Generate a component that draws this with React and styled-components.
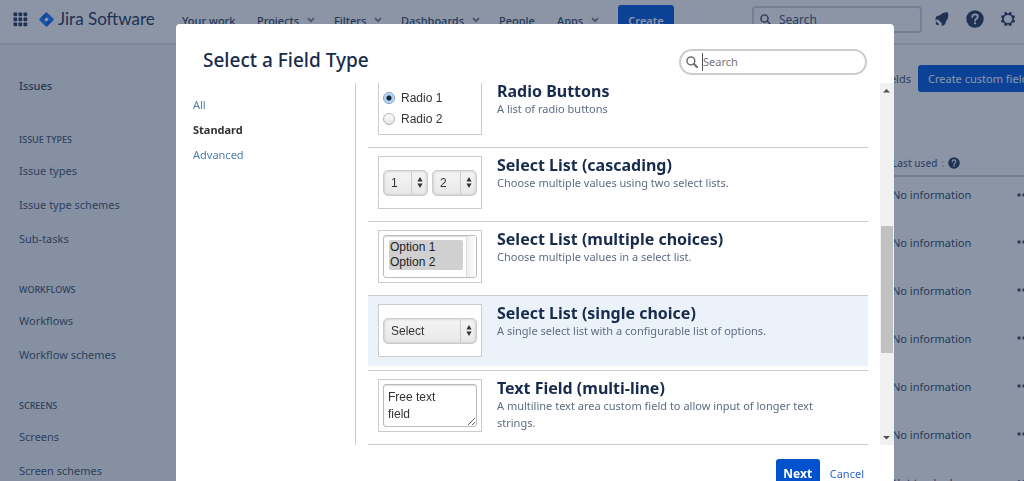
import React from "react";
import styled, { createGlobalStyle, css } from "styled-components";

const ui = '"Noto Sans", "Open Sans", sans-serif';
const arial = '"Liberation Sans", Arial, sans-serif';

const GlobalStyle = createGlobalStyle`
  *, *::before, *::after { box-sizing: border-box; }
  html, body { margin: 0; height: 100%; overflow: hidden; }
  body { font-family: ${ui}; font-size: 11px; color: #172b4d; background: #fff; }
  button, input, select, textarea { font-family: inherit; font-size: inherit; margin: 0; }
  a { text-decoration: none; color: inherit; }
  h1, h2, h3, p, ul { margin: 0; padding: 0; list-style: none; }
`;

const Page = styled.div`
  display: flex;
  flex-direction: column;
  height: 100vh;
  overflow: hidden;
`;

/* ---------- top bar ---------- */
const TopBar = styled.header`
  display: flex;
  align-items: center;
  flex: none;
  height: 45px;
  padding: 0 8px 5px 13px;
  border-bottom: 2px solid #e3e5ea;
`;
const IconButton = styled.button`
  display: flex;
  padding: 0;
  border: 0;
  background: none;
  color: #344563;
`;
const Brand = styled.a`
  display: flex;
  align-items: center;
  gap: 4px;
  width: 143px;
  margin-left: 11px;
  font-family: Lato, sans-serif;
  font-size: 17px;
  line-height: 20px;
  white-space: nowrap;
  color: #344563;
`;
const Nav = styled.nav`
  display: flex;
  flex: none;
`;
const NavItem = styled.a`
  display: flex;
  align-items: center;
  gap: 8px;
  width: ${(p) => p.$width}px;
  padding-top: 2px;
  font-weight: 500;
  white-space: nowrap;
  color: #42526e;
`;
const CreateButton = styled.button`
  width: 56px;
  height: 28px;
  padding: 2px 0 0;
  border: 0;
  border-radius: 3px;
  background: #0f62e0;
  color: #fff;
  font-weight: 600;
`;
const TopSearch = styled.label`
  display: flex;
  align-items: center;
  gap: 8px;
  width: 170px;
  height: 27px;
  margin-left: auto;
  padding: 0 6px;
  border: 2px solid #d3d6dd;
  border-radius: 4px;
  color: #42526e;
  input {
    min-width: 0;
    flex: 1;
    padding: 0;
    border: 0;
    outline: 0;
    background: none;
    font-size: 12px;
  }
  input::placeholder { color: #505f79; opacity: 1; }
`;
const TopIcons = styled.div`
  display: flex;
  align-items: center;
  gap: 16px;
  margin-left: 12px;
`;

/* ---------- page body ---------- */
const Body = styled.div`
  display: flex;
  flex: 1;
  min-height: 0;
`;
const Sidebar = styled.aside`
  flex: none;
  width: 240px;
  padding: 31px 19px 0;
  background: #f4f5f7;
  color: #505f79;
  overflow: hidden;
`;
const SidebarTitle = styled.h2`
  height: 50px;
  font-size: 11px;
  line-height: 20px;
  font-weight: 500;
  color: #42526e;
`;
const SidebarGroup = styled.section`
  margin-bottom: 20px;
`;
const SidebarHeading = styled.h3`
  font-size: 9px;
  line-height: 28px;
  font-weight: 500;
  text-transform: uppercase;
`;
const SidebarLink = styled.a`
  display: block;
  line-height: 34px;
  white-space: nowrap;
`;
const Main = styled.main`
  flex: 1;
  min-width: 0;
  padding-top: 20px;
  overflow: hidden;
`;
const Actions = styled.div`
  display: flex;
  justify-content: flex-end;
  align-items: center;
  gap: 7px;
  margin-right: -16px;
  white-space: nowrap;
`;
const TextAction = styled.a`
  color: #505f79;
`;
const PrimaryAction = styled.button`
  width: 122px;
  height: 27px;
  padding: 0 10px;
  border: 0;
  border-radius: 3px;
  background: #0f62e0;
  color: #fff;
  text-align: left;
`;
const FieldTable = styled.table`
  width: 100%;
  margin-top: 58px;
  table-layout: fixed;
  border-collapse: collapse;
  white-space: nowrap;
  th {
    height: 26px;
    padding: 0;
    border-bottom: 2px solid #d3d6dd;
    font-size: 10px;
    font-weight: 500;
    text-align: left;
    color: #5e6c84;
  }
  td {
    height: 48px;
    padding: 0 0 12px;
    color: #42526e;
  }
`;
const UsedColumn = styled.col`
  width: 124px;
`;
const MenuColumn = styled.col`
  width: 8px;
`;
const HeaderLabel = styled.span`
  display: flex;
  align-items: center;
  gap: 4px;
`;
const Separator = styled.span`
  color: #a5adba;
`;

/* ---------- dialog ---------- */
const Blanket = styled.div`
  position: fixed;
  inset: 0;
  padding: 24px 130px 0 176px;
  background: rgba(9, 30, 66, 0.47);
  overflow: hidden;
`;
const Dialog = styled.div`
  display: flex;
  flex-direction: column;
  min-height: 100vh;
  background: #fff;
  border-radius: 4px;
`;
const DialogHeader = styled.div`
  display: flex;
  align-items: center;
  justify-content: space-between;
  height: 59px;
  padding: 12px 27px 0;
`;
const DialogTitle = styled.h1`
  font-size: 19px;
  line-height: 24px;
  font-weight: 500;
  color: #172b4d;
`;
const DialogSearch = styled.label`
  display: flex;
  align-items: center;
  gap: 4px;
  width: 188px;
  height: 26px;
  margin-top: 4px;
  padding: 0 5px;
  border: 2px solid #ccc;
  border-radius: 13px;
  color: #707070;
  input {
    min-width: 0;
    flex: 1;
    height: 18px;
    padding: 0;
    border: 0;
    border-left: 1px solid #555;
    outline: 0;
    background: none;
    font-size: 11px;
  }
  input::placeholder { color: #757575; opacity: 1; }
`;
const DialogBody = styled.div`
  display: flex;
  height: 362px;
`;
const Categories = styled.nav`
  flex: none;
  width: 180px;
  padding: 9px 17px;
  border-right: 1px solid #ccc;
`;
const Category = styled.a`
  display: block;
  line-height: 25px;
  color: ${(p) => (p.$active ? "#333" : "#4c7dab")};
  font-weight: ${(p) => (p.$active ? 700 : 400)};
`;
const TypeList = styled.ul`
  display: flex;
  flex-direction: column;
  justify-content: flex-end;
  flex: 1;
  min-width: 0;
  margin: 0 12px;
  overflow: hidden;
`;
const TypeRow = styled.li`
  flex: none;
  height: ${(p) => (p.$selected ? 75 : 74)}px;
  padding-bottom: 4px;
  border-bottom: 1px solid #ccc;
`;
const TypeContent = styled.div`
  display: flex;
  gap: 15px;
  height: 100%;
  padding: 8px 10px 0;
  background: ${(p) => (p.$selected ? "#ebf2f9" : "transparent")};
`;
const Preview = styled.div`
  display: flex;
  flex: none;
  flex-direction: ${(p) => (p.$column ? "column" : "row")};
  align-items: ${(p) => (p.$column ? "flex-start" : "center")};
  justify-content: center;
  gap: 4px;
  width: 104px;
  height: 53px;
  border: 1px solid #ccc;
  background: #fff;
  font-family: ${arial};
  color: #333;
`;
const TypeText = styled.div`
  min-width: 0;
  padding-right: 20px;
`;
const TypeName = styled.h3`
  font-size: 16px;
  line-height: 18px;
  font-weight: 700;
  color: #172b4d;
`;
const TypeInfo = styled.p`
  line-height: 17px;
  color: #5e6c84;
`;
const RadioLabel = styled.label`
  display: flex;
  align-items: center;
  gap: 6px;
  padding-left: 4px;
  font-size: 12px;
  line-height: 17px;
  input {
    appearance: none;
    width: 12px;
    height: 12px;
    border: 1px solid #b5b5b5;
    border-radius: 50%;
    background: linear-gradient(#fff, #e4e4e4);
  }
  input:checked {
    border-color: #7f9fc4;
    background: radial-gradient(circle, #123 0 2px, #a9cbee 3px, #d3e6fa 6px);
  }
`;
const SelectShell = styled.span`
  display: flex;
  width: ${(p) => (p.$wide ? 94 : 45)}px;
  height: 26px;
  border: 1px solid #ccc;
  border-radius: 5px;
  background: linear-gradient(#f5f5f5, #e8e8e8);
  box-shadow: inset 0 0 3px #bbb;
  select {
    appearance: none;
    flex: 1;
    min-width: 0;
    padding: 0 7px;
    border: 0;
    outline: 0;
    background: none;
    font-family: ${arial};
    font-size: 12px;
    color: #333;
  }
`;
const SelectArrows = styled.span`
  display: flex;
  align-items: center;
  justify-content: center;
  width: 16px;
  border-left: 1px solid #ccc;
`;
const insetBox = css`
  border: 1px solid #bbb;
  border-radius: 3px;
  background: #fff;
  box-shadow: inset 0 1px 1px #ddd;
`;
const MultiShell = styled.span`
  ${insetBox}
  display: flex;
  width: 94px;
  height: 43px;
  padding: 4px 0 0 5px;
  select {
    appearance: none;
    width: 74px;
    height: 30px;
    padding: 0;
    border: 0;
    outline: 0;
    overflow: hidden;
    background: none;
    font-family: ${arial};
    font-size: 12px;
  }
  option {
    height: 15px;
    min-height: 15px;
    padding: 0 1px;
    line-height: 15px;
    color: #222;
    background: #d0d0d0;
  }
`;
const MultiScroll = styled.span`
  width: 10px;
  margin: -4px 0 0 auto;
  border-left: 1px solid #ddd;
  border-radius: 0 2px 2px 0;
  background: linear-gradient(90deg, #eee, #fff);
`;
const TextPreview = styled.textarea`
  ${insetBox}
  width: 94px;
  height: 43px;
  padding: 4px;
  outline: 0;
  overflow: hidden;
  resize: both;
  && {
    font-family: ${arial};
    font-size: 12px;
  }
  line-height: 17px;
  color: #333;
`;
const ScrollTrack = styled.div`
  display: flex;
  flex-direction: column;
  align-items: center;
  justify-content: space-between;
  flex: none;
  width: 14px;
  padding: 4px 1px 4px 0;
  background: #f1f1f1;
`;
const ScrollThumb = styled.div`
  width: 12px;
  height: 127px;
  margin-top: 50px;
  background: #c1c1c1;
`;
const DialogFooter = styled.div`
  display: flex;
  align-items: center;
  justify-content: flex-end;
  gap: 10px;
  padding: 14px 30px;
`;
const NextButton = styled.button`
  width: 44px;
  height: 28px;
  padding: 0;
  border: 0;
  border-radius: 3px;
  background: #0052cc;
  color: #fff;
  font-size: 12px;
  font-weight: 700;
`;
const CancelLink = styled.a`
  color: #2c66c4;
`;

/* ---------- icons ---------- */
const AppGrid = () => (
  <svg width="15" height="15" viewBox="0 0 15 15" fill="currentColor">
    {[0, 5, 10].map((y) =>
      [0, 5, 10].map((x) => <rect key={`${x}-${y}`} x={x + 0.5} y={y + 0.5} width="3.7" height="3.7" rx="0.7" />)
    )}
  </svg>
);
const JiraMark = () => (
  <svg width="15" height="15" viewBox="0 0 15 15">
    <path d="M6.600.7a1.300 1.300 0 0 1 1.800 0L14.300 6.600a1.300 1.300 0 0 1 0 1.800L8.400 14.300a1.300 1.300 0 0 1-1.800 0L.7 8.400a1.300 1.300 0 0 1 0-1.800Z" fill="#2684ff" />
    <path d="M7.500 5 5 7.500 2.600 5.200 7.500.4ZM7.500 10 10 7.500l2.400 2.300-4.900 4.800Z" fill="#0f62e0" opacity=".7" />
    <path d="M7.500 5.200 9.800 7.500 7.500 9.800 5.200 7.500Z" fill="#fff" />
  </svg>
);
const Chevron = () => (
  <svg width="8" height="6" viewBox="0 0 8 6" fill="none" stroke="#7a869a" strokeWidth="1.700">
    <path d="M1 1.200 4 4.200 7 1.200" />
  </svg>
);
const Magnifier = ({ size = 11, bold }) => (
  <svg width={size} height={size} viewBox="0 0 12 12" fill="none" stroke="currentColor" strokeLinecap="round">
    <circle cx="4.900" cy="4.900" r="3.900" strokeWidth="1.500" />
    <path d="m8 8 3 3" strokeWidth={bold ? 2.2 : 1.5} />
  </svg>
);
const Rocket = () => (
  <svg width="16" height="16" viewBox="0 0 16 16" fill="currentColor">
    <path d="M14 1.300C10.500 1 8 2 6 4.200L2.500 5.200 1 8.500l3.200.3 3.300 3.100.5 3.300 3-2 1.500-3.600C14.200 7.500 14.700 5 14 1.300Z" />
    <path d="M1.800 10 5.300 13.300l-1.300.7-2.200-.6Z" />
  </svg>
);
const Help = ({ size }) => (
  <svg width={size} height={size} viewBox="0 0 18 18">
    <circle cx="9" cy="9" r="8.700" fill="#344563" />
    <path d="M6.300 7.100c0-1.700 1.200-2.700 2.800-2.700s2.700 1 2.700 2.400c0 2-2.700 2-2.700 4" fill="none" stroke="#fff" strokeWidth="1.700" strokeLinecap="round" />
    <circle cx="9.100" cy="13.300" r="1.150" fill="#fff" />
  </svg>
);
const Gear = () => (
  <svg width="16" height="16" viewBox="0 0 17 17" fill="none" stroke="currentColor">
    <circle cx="8.500" cy="8.500" r="5.200" strokeWidth="1.900" />
    <g fill="currentColor" stroke="none">
      {[22.5, 67.5, 112.5, 157.5, 202.5, 247.5, 292.5, 337.5].map((a) => (
        <path key={a} d="M6.900 3.200 7.300.8h2.400l.4 2.400Z" transform={`rotate(${a} 8.500 8.500)`} />
      ))}
    </g>
  </svg>
);
const UpDown = () => (
  <svg width="6" height="11" viewBox="0 0 6 11" fill="#333">
    <path d="M3 0 5.600 4.500H.4ZM3 11 .4 6.500h5.200Z" />
  </svg>
);
const Arrow = ({ down }) => (
  <svg width="7" height="7" viewBox="0 0 7 7" fill="#505050">
    <path d={down ? "M0 2h7L3.500 5.500Z" : "M0 5.500h7L3.500 2Z"} />
  </svg>
);
const Dots = () => (
  <svg width="16" height="4" viewBox="0 0 16 4" fill="#42526e">
    <circle cx="3" cy="2" r="1.700" />
    <circle cx="8" cy="2" r="1.700" />
    <circle cx="13" cy="2" r="1.700" />
  </svg>
);

/* ---------- data ---------- */
const navItems = [
  ["Your work", 75],
  ["Projects", 77, true],
  ["Filters", 67, true],
  ["Dashboards", 98, true],
  ["People", 58],
  ["Apps", 61, true],
];
const groups = [
  ["Issue types", ["Issue types", "Issue type schemes", "Sub-tasks"]],
  ["Workflows", ["Workflows", "Workflow schemes"]],
  ["Screens", ["Screens", "Screen schemes"]],
];
const usage = [...Array(6).fill("No information"), "Not tracked"];

const PreviewSelect = ({ label, wide }) => (
  <SelectShell $wide={wide}>
    <select aria-label={`Preview ${label}`}>
      <option>{label}</option>
    </select>
    <SelectArrows><UpDown /></SelectArrows>
  </SelectShell>
);

const types = [
  {
    name: "Radio Buttons",
    info: "A list of radio buttons",
    column: true,
    preview: (
      <>
        <RadioLabel><input type="radio" name="preview" defaultChecked />Radio 1</RadioLabel>
        <RadioLabel><input type="radio" name="preview" />Radio 2</RadioLabel>
      </>
    ),
  },
  {
    name: "Select List (cascading)",
    info: "Choose multiple values using two select lists.",
    preview: (
      <>
        <PreviewSelect label="1" />
        <PreviewSelect label="2" />
      </>
    ),
  },
  {
    name: "Select List (multiple choices)",
    info: "Choose multiple values in a select list.",
    preview: (
      <MultiShell>
        <select multiple size={2} aria-label="Preview options">
          <option>Option 1</option>
          <option>Option 2</option>
        </select>
        <MultiScroll />
      </MultiShell>
    ),
  },
  {
    name: "Select List (single choice)",
    info: "A single select list with a configurable list of options.",
    selected: true,
    preview: <PreviewSelect label="Select" wide />,
  },
  {
    name: "Text Field (multi-line)",
    info: "A multiline text area custom field to allow input of longer text strings.",
    preview: <TextPreview aria-label="Preview text" defaultValue={"Free text\nfield"} />,
  },
];

export default function App() {
  return (
    <>
      <GlobalStyle />
      <Page>
        <TopBar>
          <IconButton aria-label="Switch to"><AppGrid /></IconButton>
          <Brand href="#"><JiraMark />Jira Software</Brand>
          <Nav>
            {navItems.map(([label, width, menu]) => (
              <NavItem key={label} href="#" $width={width}>{label}{menu && <Chevron />}</NavItem>
            ))}
          </Nav>
          <CreateButton>Create</CreateButton>
          <TopSearch>
            <Magnifier />
            <input aria-label="Search Jira" placeholder="Search" />
          </TopSearch>
          <TopIcons>
            <IconButton aria-label="Notifications"><Rocket /></IconButton>
            <IconButton aria-label="Help"><Help size={18} /></IconButton>
            <IconButton aria-label="Settings"><Gear /></IconButton>
          </TopIcons>
        </TopBar>
        <Body>
          <Sidebar>
            <SidebarTitle>Issues</SidebarTitle>
            {groups.map(([title, links]) => (
              <SidebarGroup key={title}>
                <SidebarHeading>{title}</SidebarHeading>
                {links.map((l) => <SidebarLink key={l} href="#">{l}</SidebarLink>)}
              </SidebarGroup>
            ))}
          </Sidebar>
          <Main>
            <Actions>
              <TextAction href="#">fields</TextAction>
              <PrimaryAction>Create custom field</PrimaryAction>
            </Actions>
            <FieldTable>
              <colgroup><col /><UsedColumn /><MenuColumn /></colgroup>
              <thead>
                <tr>
                  <th />
                  <th><HeaderLabel>Last used <Separator>:</Separator><Help size={12} /></HeaderLabel></th>
                  <th />
                </tr>
              </thead>
              <tbody>
                {usage.map((u, i) => (
                  <tr key={i}>
                    <td />
                    <td>{u}</td>
                    <td><IconButton aria-label="More actions"><Dots /></IconButton></td>
                  </tr>
                ))}
              </tbody>
            </FieldTable>
          </Main>
        </Body>
      </Page>
      <Blanket>
        <Dialog role="dialog" aria-labelledby="dialog-title">
          <DialogHeader>
            <DialogTitle id="dialog-title">Select a Field Type</DialogTitle>
            <DialogSearch>
              <Magnifier size={12} bold />
              <input aria-label="Search field types" placeholder="Search" />
            </DialogSearch>
          </DialogHeader>
          <DialogBody>
            <Categories>
              <Category href="#">All</Category>
              <Category href="#" $active>Standard</Category>
              <Category href="#">Advanced</Category>
            </Categories>
            <TypeList>
              {types.map((t) => (
                <TypeRow key={t.name} $selected={t.selected}>
                  <TypeContent $selected={t.selected}>
                    <Preview $column={t.column}>{t.preview}</Preview>
                    <TypeText>
                      <TypeName>{t.name}</TypeName>
                      <TypeInfo>{t.info}</TypeInfo>
                    </TypeText>
                  </TypeContent>
                </TypeRow>
              ))}
            </TypeList>
            <ScrollTrack>
              <Arrow />
              <ScrollThumb />
              <Arrow down />
            </ScrollTrack>
          </DialogBody>
          <DialogFooter>
            <NextButton>Next</NextButton>
            <CancelLink href="#">Cancel</CancelLink>
          </DialogFooter>
        </Dialog>
      </Blanket>
    </>
  );
}
